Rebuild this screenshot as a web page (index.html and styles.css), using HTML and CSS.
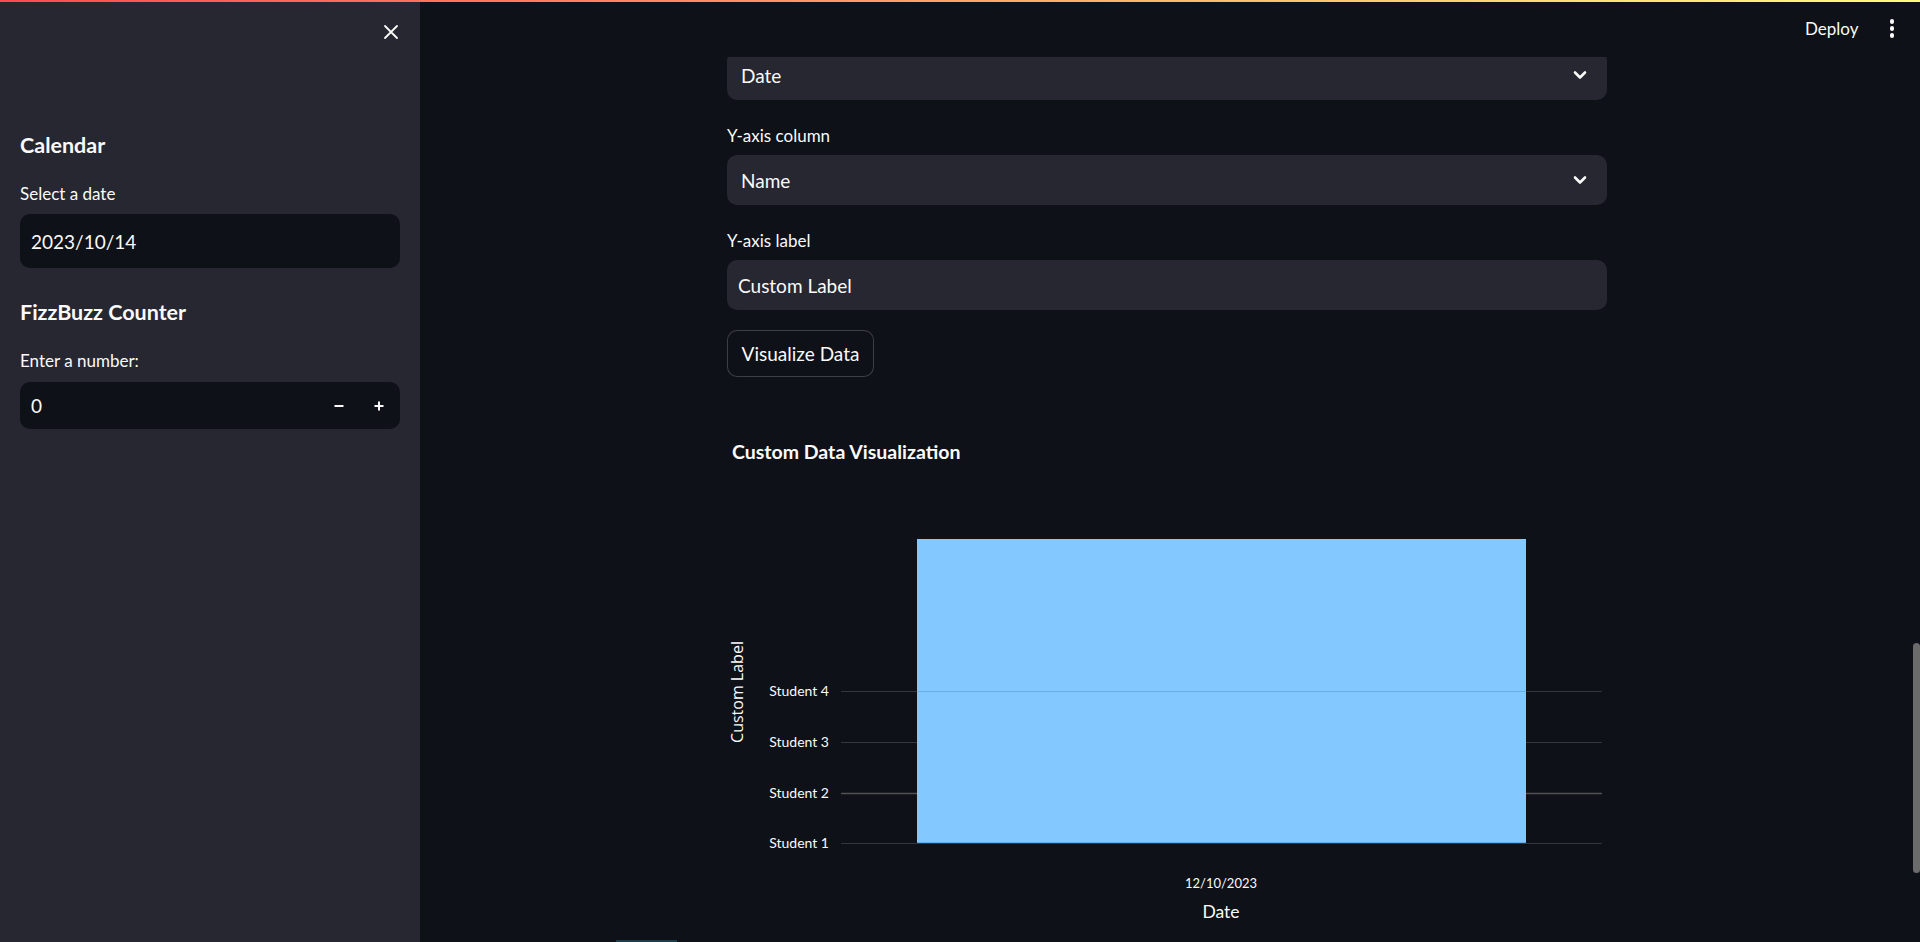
FILE: index.html
```html
<!DOCTYPE html>
<html lang="en">
<head>
<meta charset="utf-8">
<title>Streamlit</title>
<link rel="stylesheet" href="styles.css">
</head>
<body>
<div class="decoration"></div>
<div class="app">
  <aside class="sidebar">
    <div class="sb-top">
      <button class="close-btn" aria-label="Close sidebar">
        <svg width="16" height="16" viewBox="0 0 16 16"><path d="M2 2 L14 14 M14 2 L2 14" stroke="#fafafa" stroke-width="1.8" stroke-linecap="round"/></svg>
      </button>
    </div>
    <h2 class="sb-heading first">Calendar</h2>
    <label class="sb-label">Select a date</label>
    <div class="sb-input date-input">2023/10/14</div>
    <h2 class="sb-heading second">FizzBuzz Counter</h2>
    <label class="sb-label">Enter a number:</label>
    <div class="sb-input number-input">
      <span class="num-value">0</span>
      <span class="steppers">
        <span class="step">
          <svg width="12" height="12" viewBox="0 0 12 12"><path d="M1.5 6 H10.5" stroke="#fafafa" stroke-width="2"/></svg>
        </span>
        <span class="step">
          <svg width="12" height="12" viewBox="0 0 12 12"><path d="M1.5 6 H10.5 M6 1.5 V10.5" stroke="#fafafa" stroke-width="2"/></svg>
        </span>
      </span>
    </div>
  </aside>

  <main class="main">
    <header class="topbar">
      <span class="deploy">Deploy</span>
      <span class="kebab"><i></i><i></i><i></i></span>
    </header>

    <section class="content">
      <div class="select">
        <span>Date</span>
        <svg class="chev" width="14" height="10" viewBox="0 0 14 10"><path d="M2 2.5 L7 7.5 L12 2.5" fill="none" stroke="#fafafa" stroke-width="2.6" stroke-linecap="round" stroke-linejoin="round"/></svg>
      </div>

      <label class="field-label">Y-axis column</label>
      <div class="select">
        <span>Name</span>
        <svg class="chev" width="14" height="10" viewBox="0 0 14 10"><path d="M2 2.5 L7 7.5 L12 2.5" fill="none" stroke="#fafafa" stroke-width="2.6" stroke-linecap="round" stroke-linejoin="round"/></svg>
      </div>

      <label class="field-label">Y-axis label</label>
      <div class="text-input">Custom Label</div>

      <button class="btn">Visualize Data</button>

      <svg class="chart" width="880" height="545" viewBox="0 0 880 545">
        <text class="c-title" x="5" y="62">Custom Data Visualization</text>
        <g class="grid">
          <line x1="114" x2="875" y1="294.5" y2="294.5"/>
          <line x1="114" x2="875" y1="345.5" y2="345.5"/>
          <line class="strong" x1="114" x2="875" y1="396.5" y2="396.5"/>
          <line x1="114" x2="875" y1="446.5" y2="446.5"/>
        </g>
        <rect class="bar" x="190" y="142" width="609" height="304"/>
        <line class="bar-line" x1="190" x2="799" y1="294.5" y2="294.5"/>
        <line class="bar-line" x1="190" x2="799" y1="445.5" y2="445.5"/>
        <g class="ticks">
          <text x="102" y="299">Student 4</text>
          <text x="102" y="350">Student 3</text>
          <text x="102" y="401">Student 2</text>
          <text x="102" y="451">Student 1</text>
        </g>
        <text class="y-title" transform="translate(16 295) rotate(-90)">Custom Label</text>
        <text class="x-tick" x="494" y="491">12/10/2023</text>
        <text class="x-title" x="494" y="521">Date</text>
      </svg>
    </section>

    <div class="bottom-mark"></div>
    <div class="scroll-thumb"></div>
  </main>
</div>
</body>
</html>
```

FILE: styles.css
```css
* { box-sizing: border-box; }

html, body {
  margin: 0;
  padding: 0;
  height: 100%;
  background: #0e1117;
  color: #fafafa;
  font-family: "Lato", "Source Sans Pro", sans-serif;
  overflow: hidden;
}

.decoration {
  position: absolute;
  top: 0;
  left: 0;
  right: 0;
  height: 2px;
  background: linear-gradient(90deg, #ff4b4b, #fffd80);
  z-index: 10;
}

.app {
  display: flex;
  height: 942px;
}

/* Sidebar */
.sidebar {
  width: 420px;
  flex: 0 0 420px;
  background: #262730;
  padding: 0 20px;
  display: flex;
  flex-direction: column;
}

.sb-top {
  height: 64px;
  display: flex;
  justify-content: flex-end;
  align-items: center;
  padding-right: 1px;
}

.close-btn {
  background: none;
  border: none;
  padding: 0;
  width: 16px;
  height: 16px;
  display: flex;
}

.sb-heading {
  margin: 0;
  font-size: 21.5px;
  font-weight: 700;
  line-height: 30px;
}
.sb-heading.first { margin-top: 66px; }
.sb-heading.second { margin-top: 29px; }

.sb-label {
  display: block;
  font-size: 17px;
  line-height: 28px;
  margin-top: 20px;
}

.sb-input {
  background: #0e1117;
  border-radius: 10px;
  color: #fafafa;
  font-size: 19px;
  display: flex;
  align-items: center;
}

.date-input {
  height: 54px;
  margin-top: 6px;
  padding-left: 11px;
}

.number-input {
  height: 47px;
  margin-top: 7px;
  padding-left: 11px;
  padding-right: 15px;
  justify-content: space-between;
}

.steppers {
  display: flex;
  gap: 28px;
}
.step {
  display: flex;
  width: 12px;
  height: 12px;
}

/* Main */
.main {
  position: relative;
  flex: 1;
  display: flex;
  justify-content: center;
  padding-right: 6px;
  padding-top: 50px;
  overflow: hidden;
}

.topbar {
  position: absolute;
  top: 0;
  left: 0;
  right: 0;
  height: 57px;
  background: #0e1117;
  display: flex;
  justify-content: flex-end;
  align-items: center;
  padding-right: 26px;
  gap: 31px;
  z-index: 5;
}

.deploy {
  font-size: 17px;
  color: #fafafa;
}

.kebab {
  display: flex;
  flex-direction: column;
  gap: 2.5px;
}
.kebab i {
  display: block;
  width: 4.5px;
  height: 4.5px;
  border-radius: 50%;
  background: #fafafa;
}

.content {
  width: 880px;
  display: flex;
  flex-direction: column;
  align-items: flex-start;
}

.select {
  width: 100%;
  height: 50px;
  background: #262730;
  border-radius: 10px;
  display: flex;
  align-items: center;
  justify-content: space-between;
  padding: 0 20px 0 14px;
  font-size: 19px;
}

.field-label {
  display: block;
  font-size: 17px;
  line-height: 28px;
  margin-top: 22px;
  margin-bottom: 5px;
}

.text-input {
  width: 100%;
  height: 50px;
  background: #262730;
  border-radius: 10px;
  display: flex;
  align-items: center;
  padding-left: 11px;
  font-size: 19px;
}

.btn {
  margin-top: 20px;
  width: 147px;
  height: 47px;
  background: #0e1117;
  border: 1px solid rgba(250, 250, 250, 0.2);
  border-radius: 10px;
  color: #fafafa;
  font-family: inherit;
  font-size: 19px;
  padding: 0;
}

.chart {
  margin-top: 20px;
  display: block;
  flex: 0 0 auto;
}

.c-title {
  font-family: "Lato", sans-serif;
  font-weight: 700;
  font-size: 19.5px;
  fill: #fafafa;
}

.grid line {
  stroke: rgba(250, 250, 250, 0.16);
  stroke-width: 1;
}
.grid line.strong {
  stroke: rgba(250, 250, 250, 0.28);
  stroke-width: 1.5;
}

.bar { fill: #83c9ff; }
.bar-line { stroke: #6aaee6; stroke-width: 1; }

.ticks text {
  font-family: "Lato", sans-serif;
  font-size: 14px;
  fill: #fafafa;
  text-anchor: end;
}

.y-title {
  font-family: "Open Sans", sans-serif;
  font-size: 16px;
  fill: #fafafa;
  text-anchor: middle;
}

.x-tick {
  font-family: "Lato", sans-serif;
  font-size: 13px;
  fill: #fafafa;
  text-anchor: middle;
}

.x-title {
  font-family: "Lato", sans-serif;
  font-size: 17.5px;
  fill: #fafafa;
  text-anchor: middle;
}

.bottom-mark {
  position: absolute;
  left: 196px;
  bottom: 0;
  width: 61px;
  height: 2px;
  background: #17404c;
}

.scroll-thumb {
  position: absolute;
  right: 0;
  top: 643px;
  width: 7px;
  height: 230px;
  border-radius: 4px;
  background: #6b6b6b;
}
```
